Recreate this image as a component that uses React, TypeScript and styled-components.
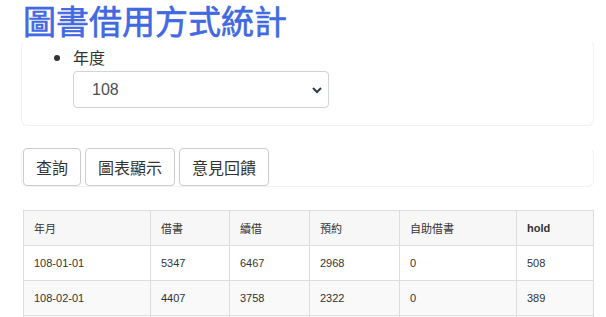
import styled, { createGlobalStyle } from "styled-components";

const GlobalStyle = createGlobalStyle`
  body {
    margin: 0;
    background: #fff;
    font-family: "Liberation Sans", "Noto Sans CJK TC", sans-serif;
    color: #333;
  }
`;

const Page = styled.div`
  padding: 0 12px 0 21px;
`;

const Title = styled.h1`
  margin: 0;
  padding: 1px 0 1px 2px;
  height: 38px;
  font-size: 33px;
  line-height: 38px;
  font-weight: 400;
  color: #4169e1;
  -webkit-text-stroke: 0.6px #4169e1;
  font-family: "Noto Sans CJK TC", sans-serif;
`;

const Panel = styled.div`
  border: 1px solid #f1f1f1;
  border-top-color: transparent;
  border-radius: 6px;
`;

const FilterList = styled.ul`
  margin: 0;
  padding: 4px 0 17px 51px;
  font-size: 16px;
  font-family: "Noto Sans CJK TC", sans-serif;
`;

const FilterItem = styled.li`
  line-height: 24px;
`;

const Select = styled.select`
  display: block;
  margin-top: 2px;
  width: 256px;
  height: 37px;
  padding: 0 18px;
  font-size: 16px;
  font-family: "Liberation Sans", sans-serif;
  color: #495057;
  background: #fff
    url("data:image/svg+xml,%3Csvg xmlns='http://www.w3.org/2000/svg' width='12' height='12' viewBox='0 0 12 12'%3E%3Cpath d='M2 4l4 4 4-4' fill='none' stroke='%23343a40' stroke-width='2'/%3E%3C/svg%3E")
    no-repeat right 5px center / 12px 12px;
  border: 1px solid #ced4da;
  border-radius: 4px;
  appearance: none;
`;

const Toolbar = styled(Panel)`
  margin-top: 22px;
  display: flex;
  gap: 4px;
  padding: 0 1px;
  border-color: transparent #f1f1f1 #f1f1f1 #f1f1f1;
`;

const Button = styled.button`
  height: 38px;
  padding: 0 12px;
  margin-top: -1px;
  font-size: 16px;
  font-family: "Noto Sans CJK TC", sans-serif;
  color: #333;
  background: #fff;
  border: 1px solid #ccc;
  border-radius: 4px;
`;

const Table = styled.table`
  margin: 23px 0 0 2px;
  width: 570px;
  border-collapse: collapse;
  table-layout: fixed;
  font-size: 11px;
`;

const Cell = styled.td<{ $w?: number }>`
  box-sizing: border-box;
  width: ${(p) => (p.$w ? `${p.$w}px` : "auto")};
  height: 35px;
  padding: 0 10px;
  border: 1px solid #ddd;
  text-align: left;
  color: #333;
  white-space: nowrap;
`;

const HeadCell = styled(Cell).attrs({ as: "th" })`
  font-weight: normal;
  background: #f7f7f7;
  &:last-child {
    font-weight: bold;
  }
`;

const Row = styled.tr<{ $striped: boolean }>`
  background: ${(p) => (p.$striped ? "#f9f9f9" : "#fff")};
`;

const widths = [127, 79, 80, 90, 117, 77];
const headers = ["年月", "借書", "續借", "預約", "自助借書", "hold"];
const rows = [
  ["108-01-01", "5347", "6467", "2968", "0", "508"],
  ["108-02-01", "4407", "3758", "2322", "0", "389"],
  ["108-03-01", "6120", "5210", "3015", "0", "472"],
];

export default function App() {
  return (
    <Page>
      <GlobalStyle />
      <Title>圖書借用方式統計</Title>
      <Panel>
        <FilterList>
          <FilterItem>
            年度
            <Select defaultValue="108">
              <option value="108">108</option>
              <option value="107">107</option>
            </Select>
          </FilterItem>
        </FilterList>
      </Panel>
      <Toolbar>
        <Button>查詢</Button>
        <Button>圖表顯示</Button>
        <Button>意見回饋</Button>
      </Toolbar>
      <Table>
        <thead>
          <tr>
            {headers.map((h, i) => (
              <HeadCell key={h} $w={widths[i]}>
                {h}
              </HeadCell>
            ))}
          </tr>
        </thead>
        <tbody>
          {rows.map((r, ri) => (
            <Row key={r[0]} $striped={ri % 2 === 1}>
              {r.map((c, ci) => (
                <Cell key={ci}>{c}</Cell>
              ))}
            </Row>
          ))}
        </tbody>
      </Table>
    </Page>
  );
}
